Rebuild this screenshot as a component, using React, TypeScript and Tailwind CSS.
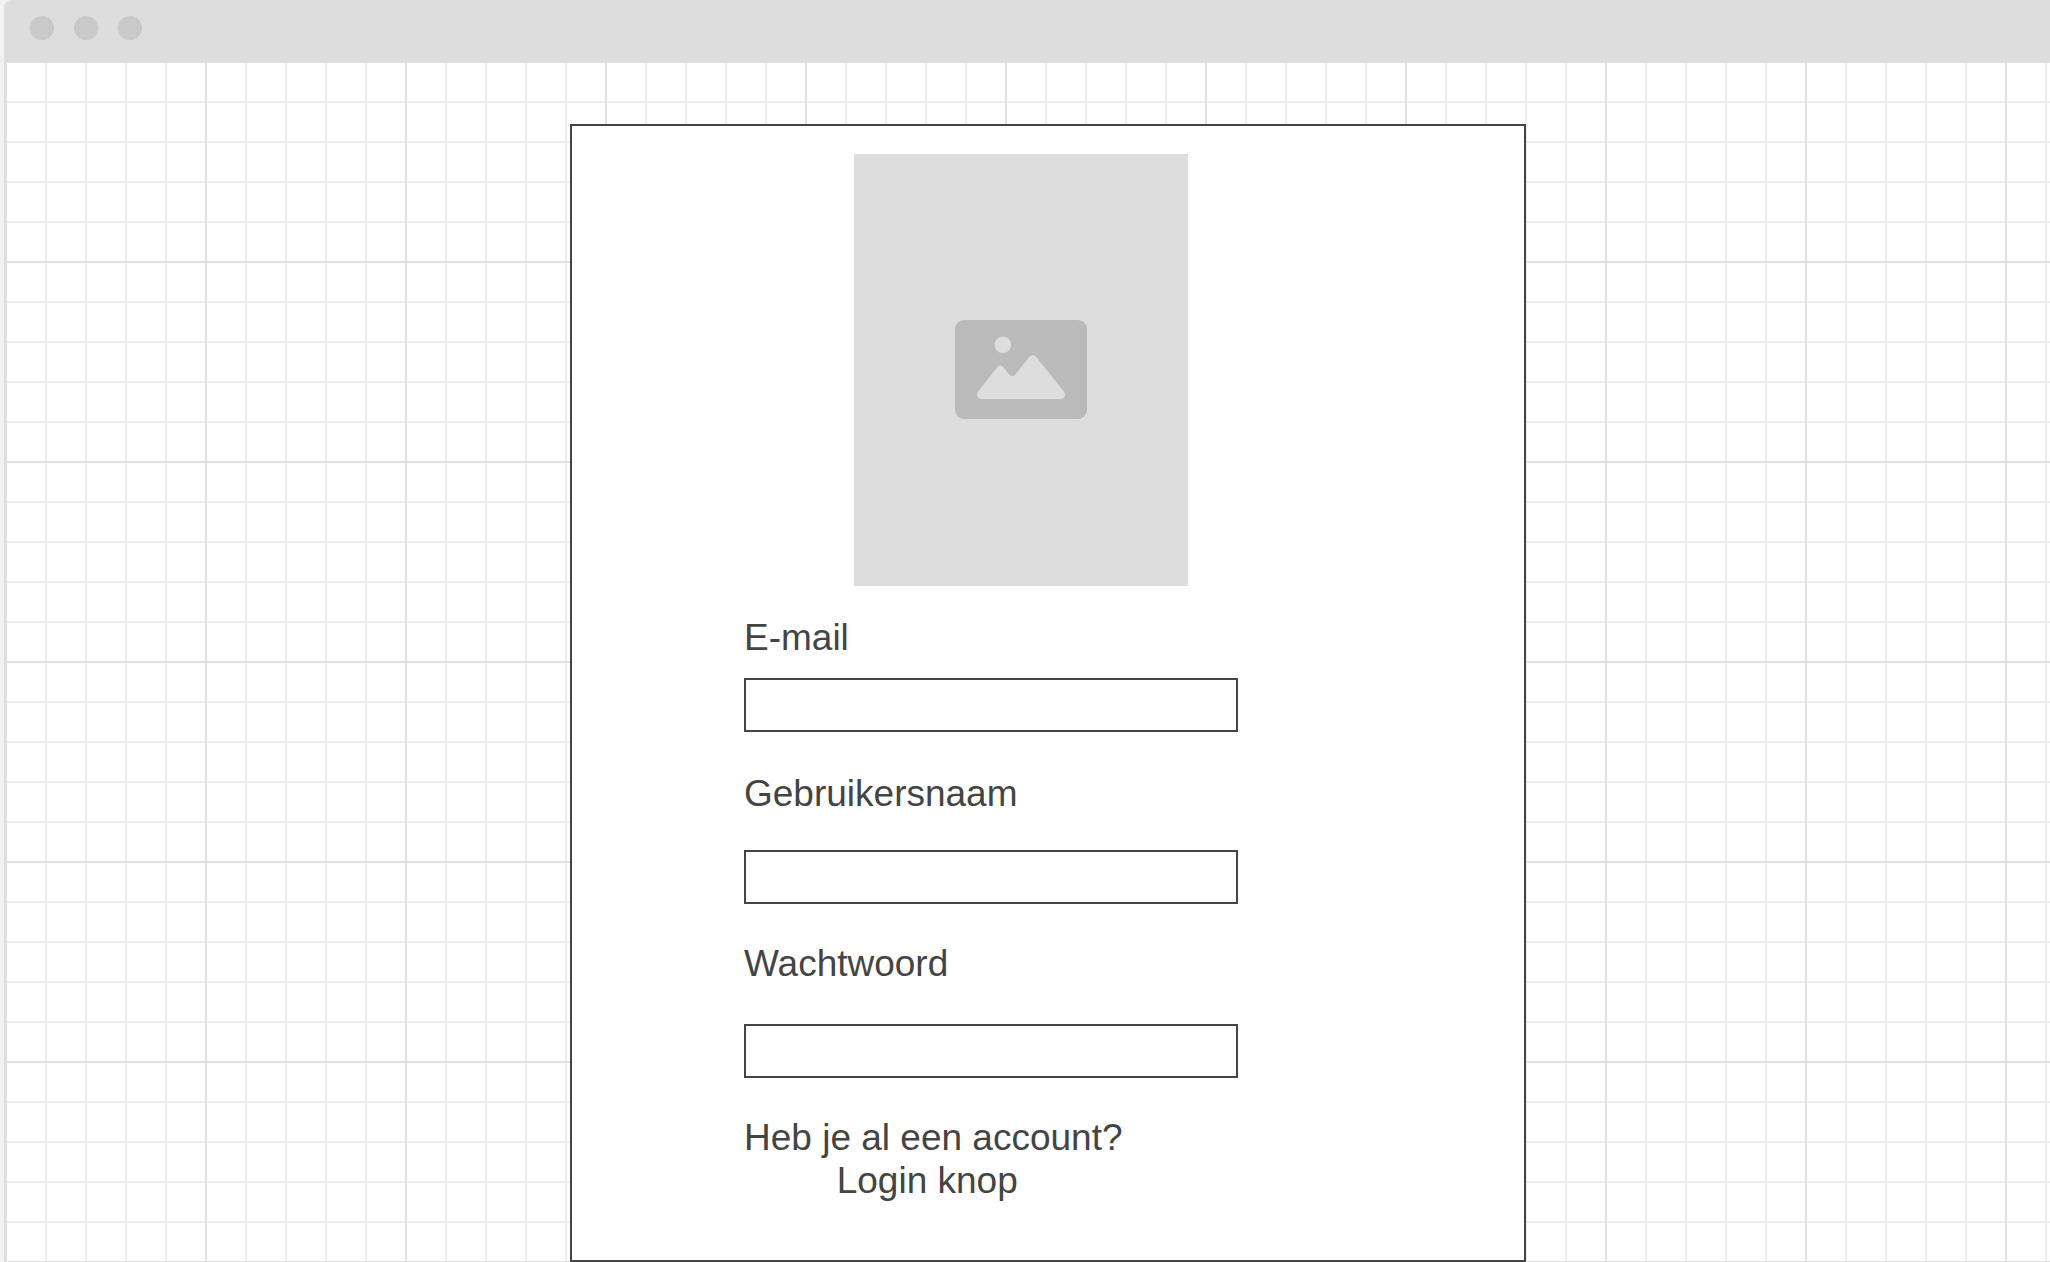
import { useId } from "react";

function ImageIcon() {
  return (
    <svg width="132" height="100" viewBox="0 0 132 100" aria-hidden="true">
      <rect width="132" height="99" rx="9" fill="#bababa" />
      <circle cx="47.8" cy="24.8" r="8.3" fill="#dddddd" />
      <path
        d="M23 71.5 L42.6 46.8 Q45.3 43.6 48 46.8 L54.2 54.4 Q57.3 57.6 60.4 54.4 L74.6 36.4 Q77.7 33.4 80.8 36.4 L109 71.5 C111.600 75 109.500 79 105.500 79 L26.500 79 C22.500 79 20.400 75 23 71.500 Z"
        fill="#dddddd"
      />
    </svg>
  );
}

type FieldProps = { label: string; type: string; className: string };

function Field({ label, type, className }: FieldProps) {
  const id = useId();
  return (
    <div className={`flex flex-col ${className}`}>
      <label htmlFor={id}>{label}</label>
      <input
        id={id}
        type={type}
        className="h-[54px] w-full border-2 border-[#444444] bg-white px-3 text-2xl outline-none"
      />
    </div>
  );
}

export default function App() {
  return (
    <div className="min-h-screen bg-[#f2f2f2] pl-1 font-['Liberation_Sans',Arial,sans-serif] text-[37px] leading-[43px] text-[#444444]">
      <div className="flex min-h-screen flex-col">
        <header className="flex h-[62px] items-start gap-5 rounded-tl-lg bg-[#dddddd] pt-4 pl-[26px]">
          <span className="size-6 rounded-full bg-[#c9c9c9]" />
          <span className="size-6 rounded-full bg-[#c9c9c9]" />
          <span className="size-6 rounded-full bg-[#c9c9c9]" />
        </header>
        <main className="grid flex-1 grid-cols-[564fr_956fr_524fr] border-l-2 border-[#dddddd] bg-white bg-[linear-gradient(to_right,transparent_198px,#e0e0e0_198px),linear-gradient(to_bottom,transparent_198px,#e0e0e0_198px),linear-gradient(to_right,transparent_38px,#ededed_38px),linear-gradient(to_bottom,transparent_38px,#ededed_38px)] bg-[size:200px_200px,200px_200px,40px_40px,40px_40px] bg-[position:1px_1px]">
          <form
            className="col-start-2 mt-[62px] border-2 border-[#444444] bg-white pt-7 pb-[58px] pl-[172px]"
            onSubmit={(e) => e.preventDefault()}
          >
            <div className="ml-[110px] flex h-[432px] w-[334px] items-center justify-center bg-[#dddddd]">
              <ImageIcon />
            </div>
            <div className="mt-[30px] flex w-[494px] max-w-full flex-col">
              <Field label="E-mail" type="email" className="gap-[19px]" />
              <Field label="Gebruikersnaam" type="text" className="mt-10 gap-[35px]" />
              <Field label="Wachtwoord" type="password" className="mt-[38px] gap-[39px]" />
              <div className="mt-[38px] flex w-fit flex-col items-center">
                <p>Heb je al een account?</p>
                <button type="submit" className="pr-3">
                  Login knop
                </button>
              </div>
            </div>
          </form>
        </main>
      </div>
    </div>
  );
}
